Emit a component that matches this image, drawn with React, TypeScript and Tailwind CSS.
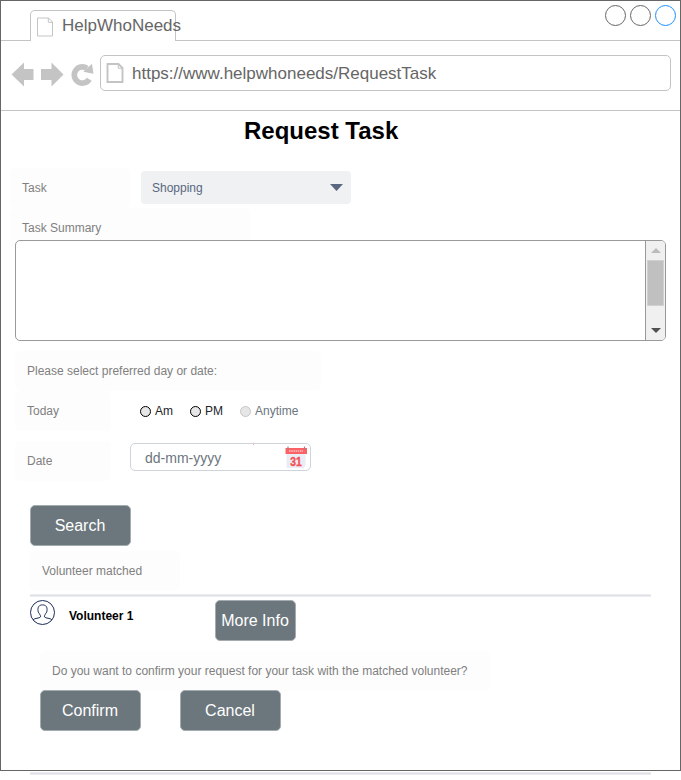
import type { ReactNode } from "react";

function Label({ className = "", children }: { className?: string; children: ReactNode }) {
  return (
    <div className={`flex h-10 items-center rounded-md bg-[#fdfdfd] pl-3 text-xs whitespace-nowrap text-[#808080] ${className}`}>
      {children}
    </div>
  );
}

function Button({ className = "", children }: { className?: string; children: ReactNode }) {
  return (
    <button
      className={`h-[41px] rounded-[5px] border border-[#a4abb1] bg-[#6c777d] pr-px text-center text-base whitespace-nowrap text-white ${className}`}
    >
      {children}
    </button>
  );
}

function Rule() {
  return <div className="ml-[30px] h-[3px] w-[621px] border-y border-[#ecedf0] bg-[#dfe0e5]" />;
}

function PageIcon({ className, stroke }: { className: string; stroke: number }) {
  return (
    <svg className={className} viewBox="0 0 18 20" fill="none" stroke="#c4c4c4" strokeWidth={stroke}>
      <path d="M1.5 1H12.5L16.5 5V19H1.5Z" />
      <path d="M12.3 1V5.3H16.5" strokeWidth="1" />
    </svg>
  );
}

function Radio({ disabled = false, className = "", children }: { disabled?: boolean; className?: string; children: ReactNode }) {
  return (
    <label className={`flex items-center gap-1 text-xs ${disabled ? "text-[#6c757d]" : "text-[#212529]"} ${className}`}>
      <span className={`size-[11px] rounded-full border bg-[#e6e6e6] ${disabled ? "border-[#c6c6c6]" : "border-black"}`} />
      {children}
    </label>
  );
}

function Calendar() {
  return (
    <svg className="h-[23px] w-[23px]" viewBox="0 0 23 23">
      <path d="M1.5 5H20.5V20L18.5 22H1.5Z" fill="#e9edf5" />
      <path d="M0.5 2H22V8H0.5Z" fill="#fb6265" />
      <path d="M3 0.5V4M19.5 0.5V4" stroke="#b7797c" strokeWidth="1.2" />
      <path d="M4 5H18" stroke="#ffc1c2" strokeWidth="1.4" strokeDasharray="1.5 0.7" />
      <text x="11" y="20" textAnchor="middle" fontSize="13" fontWeight="700" fill="#f64f53" stroke="#f64f53" strokeWidth="0.4" textLength="11.5" lengthAdjust="spacingAndGlyphs">
        31
      </text>
    </svg>
  );
}

function Browser() {
  return (
    <header>
      <div className="flex h-10 items-start border-b border-[#c4c4c4]">
        <div className="mt-[9px] ml-[29px] flex h-[31px] w-[146px] items-center rounded-t-[5px] border border-b-0 border-[#c4c4c4] bg-white pl-[5px] whitespace-nowrap">
          <PageIcon className="mt-0.5 h-5 w-[18px] shrink-0" stroke={1} />
          <span className="ml-2 text-[17px] leading-5 text-[#666]">HelpWhoNeeds</span>
        </div>
        <div className="mt-1 mr-1 ml-auto flex gap-1">
          <span className="size-[21px] rounded-full border border-[#666]" />
          <span className="size-[21px] rounded-full border border-[#666]" />
          <span className="size-[21px] rounded-full border border-[#1a8fff]" />
        </div>
      </div>
      <div className="flex h-[70px] items-start border-b border-[#c4c4c4] pt-[14px] pl-[10px]">
        <svg className="mt-[6px] h-7 w-[84px]" viewBox="0 0 84 28" fill="#c4c4c4">
          <path d="M0.5 13.5L13 1.5V8H22.5V19H13V25.5Z" />
          <path d="M52.5 13.5L40.5 1.5V8H30V19H40.5V25.5Z" />
          <path d="M78.3 18.2A8.1 8.1 0 1 1 76 7.3" fill="none" stroke="#c4c4c4" strokeWidth="5.6" />
          <path d="M81 2.8L82.5 12.8L72.3 10.8Z" />
        </svg>
        <div className="ml-[5px] flex h-9 w-[571px] items-center rounded-[5px] border border-[#c4c4c4] pl-[5px]">
          <PageIcon className="h-5 w-[18px]" stroke={1.9} />
          <span className="mt-0.5 ml-2 text-[17px] text-[#666]">https://www.helpwhoneeds/RequestTask</span>
        </div>
      </div>
    </header>
  );
}

export default function App() {
  return (
    <div className="h-[780px] w-[681px] overflow-hidden bg-white font-['Liberation_Sans',Arial,sans-serif]">
      <div className="h-[771px] border border-[#666]">
        <Browser />
        <main className="flex flex-col">
          <h1 className="mt-1 h-8 pl-[243px] text-2xl leading-8 font-bold text-black">Request Task</h1>
          <div className="mt-[21px] ml-[9px] flex items-start">
            <Label className="w-[120px]">Task</Label>
            <div className="mt-[3px] ml-[10.6px] flex h-[33px] w-[210px] items-center justify-between rounded-[4px] bg-[#f0f1f3] pr-2 pl-[11.4px] text-xs text-[#596780]">
              <span className="mt-px">Shopping</span>
              <svg className="h-[7px] w-[13px]" viewBox="0 0 13 7">
                <path d="M0 0H13L6.5 7Z" fill="#596780" />
              </svg>
            </div>
          </div>
          <Label className="ml-[9px] w-[240px]">Task Summary</Label>
          <div className="-mt-2 ml-[14px] flex h-[101px] w-[651px] overflow-hidden rounded-[5px] border border-[#999] bg-white">
            <div className="flex-1" />
            <div className="flex w-5 flex-col items-center border-l border-[#999] bg-[#f0f0f0]">
              <svg className="mt-[7px] h-[5px] w-[10px]" viewBox="0 0 10 5">
                <path d="M0 5H10L5 0Z" fill="#bbb" />
              </svg>
              <div className="mt-[7px] h-[46px] w-[17px] border border-[#d0d0d0] bg-[#c0c0c0]" />
              <svg className="mt-[22px] h-[5px] w-[10px]" viewBox="0 0 10 5">
                <path d="M0 0H10L5 5Z" fill="#505050" />
              </svg>
            </div>
          </div>
          <Label className="mt-[10px] ml-[14px] w-[306px]">Please select preferred day or date:</Label>
          <div className="ml-[14px] flex items-center">
            <Label className="w-[96px]">Today</Label>
            <Radio className="ml-[29px]">Am</Radio>
            <Radio className="ml-[17px]">PM</Radio>
            <Radio disabled className="ml-[17px]">Anytime</Radio>
          </div>
          <div className="mt-[10px] ml-[14px] flex">
            <Label className="w-[96px]">Date</Label>
            <div className="relative mt-[2px] ml-[19px] flex h-7 w-[181px] items-center justify-between rounded-[5px] border border-[#ced4da] bg-white pr-0.5 pl-[14px] text-sm text-[#6c757d]">
              <span className="mt-0.5">dd-mm-yyyy</span>
              <Calendar />
              <span className="absolute top-0 left-[122px] size-px bg-[#f5a3a5]" />
            </div>
          </div>
          <Button className="mt-6 ml-[29px] w-[101px]">Search</Button>
          <Label className="mt-[5px] ml-[29px] w-[150px]">Volunteer matched</Label>
          <div className="mt-[3px] -ml-px">
            <Rule />
          </div>
          <div className="mt-[3px] ml-[29px] flex">
            <svg className="h-[25px] w-[25px]" viewBox="0 0 25 25" fill="none" stroke="#1c2c58" strokeWidth="1">
              <circle cx="12.5" cy="12.5" r="12" />
              <path d="M3 20C4.5 17.8 9.5 18.6 10.5 16.9C11 15.8 9.8 14.8 9.2 13.3L8.3 12.2L8 10.6C7.6 7 9 4.9 12.5 4.9S17.4 7 17 10.6L16.7 12.2L15.8 13.3C15.2 14.8 14 15.8 14.5 16.9C15.5 18.6 20.5 17.8 22 20" />
            </svg>
            <strong className="mt-2 ml-[14px] w-[146px] text-xs leading-4 text-black">Volunteer 1</strong>
            <Button className="w-[81px]">More Info</Button>
          </div>
          <Label className="mt-[10px] ml-[39px] w-[450px]">Do you want to confirm your request for your task with the matched volunteer?</Label>
          <div className="-mt-px ml-[39px] flex gap-[39px]">
            <Button className="w-[101px]">Confirm</Button>
            <Button className="w-[101px]">Cancel</Button>
          </div>
        </main>
      </div>
      <div className="mt-px">
        <Rule />
      </div>
    </div>
  );
}
